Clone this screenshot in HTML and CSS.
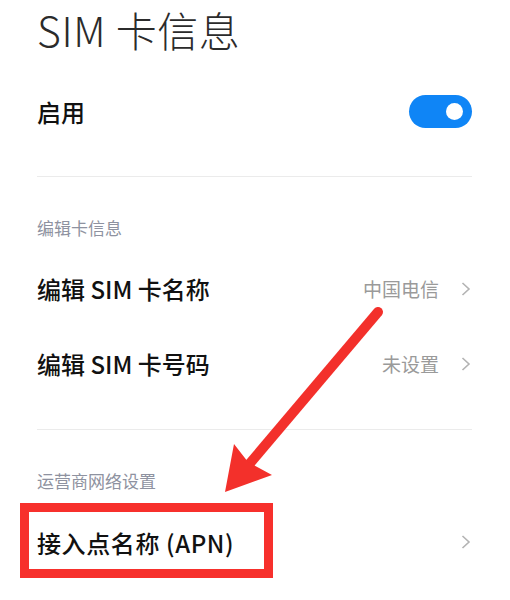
FILE: index.html
```html
<!DOCTYPE html>
<html lang="zh-CN">
<head>
<meta charset="utf-8">
<title>SIM 卡信息</title>
<link rel="stylesheet" href="styles.css">
</head>
<body>
<div class="page">
  <h1 class="title">SIM 卡信息</h1>
  <div class="row row-enable">
    <span class="label">启用</span>
    <span class="toggle"><span class="knob"></span></span>
  </div>
  <div class="divider"></div>
  <div class="section-header">编辑卡信息</div>
  <div class="row">
    <span class="label">编辑 SIM 卡名称</span>
    <span class="value">中国电信<svg class="chev" viewBox="0 0 10 14" width="10" height="14"><path d="M1.5 1 L8 7 L1.5 13" fill="none" stroke="#b3b3b3" stroke-width="1.6"/></svg></span>
  </div>
  <div class="row">
    <span class="label">编辑 SIM 卡号码</span>
    <span class="value">未设置<svg class="chev" viewBox="0 0 10 14" width="10" height="14"><path d="M1.5 1 L8 7 L1.5 13" fill="none" stroke="#b3b3b3" stroke-width="1.6"/></svg></span>
  </div>
  <div class="divider divider-2"></div>
  <div class="section-header">运营商网络设置</div>
  <div class="row row-apn">
    <span class="label">接入点名称 (APN)</span>
    <span class="value"><svg class="chev" viewBox="0 0 10 14" width="10" height="14"><path d="M1.5 1 L8 7 L1.5 13" fill="none" stroke="#b3b3b3" stroke-width="1.6"/></svg></span>
  </div>
</div>
<div class="highlight-box"></div>
<svg class="arrow" width="510" height="600" viewBox="0 0 510 600">
  <line x1="378" y1="312" x2="246" y2="468" stroke="#f3302b" stroke-width="10" stroke-linecap="round"/>
  <polygon points="225,492 234,444 248,462 272,475" fill="#f3302b"/>
</svg>
</body>
</html>
```
FILE: styles.css
```css
html, body {
  margin: 0;
  padding: 0;
  background: #ffffff;
}
body {
  width: 510px;
  height: 600px;
  overflow: hidden;
  position: relative;
  font-family: "Noto Sans CJK SC", "Noto Sans", sans-serif;
}
.page {
  padding: 0 38px 0 37px;
}
.title {
  margin: 0;
  height: 58px;
  line-height: 58px;
  font-size: 41px;
  font-weight: 300;
  color: #2b2b2b;
  letter-spacing: 0.6px;
}
.row {
  height: 75px;
  display: flex;
  align-items: center;
  justify-content: space-between;
}
.row-enable {
  margin-top: 16px;
  height: 74px;
}
.row-apn {
  height: 76px;
}
.label {
  font-size: 24px;
  font-weight: 500;
  color: #111111;
}
.row-apn .label {
  letter-spacing: 0.6px;
}
.value {
  display: flex;
  align-items: center;
  font-size: 19px;
  color: #9a9a9a;
}
.chev {
  margin-left: 22px;
  margin-right: 1px;
}
.toggle {
  width: 63px;
  height: 33px;
  border-radius: 17px;
  background: #0f85f6;
  display: flex;
  align-items: center;
  justify-content: flex-end;
  padding-right: 9px;
  box-sizing: border-box;
}
.knob {
  width: 17px;
  height: 17px;
  border-radius: 50%;
  background: #ffffff;
}
.divider {
  margin-top: 28px;
  height: 1px;
  background: #ebebeb;
}
.divider-2 {
  margin-top: 28px;
}
.section-header {
  padding-top: 28px;
  line-height: 46px;
  font-size: 17px;
  color: #8e92a0;
}
.highlight-box {
  position: absolute;
  left: 20px;
  top: 503px;
  width: 253px;
  height: 75px;
  box-sizing: border-box;
  border: 9px solid #f7302c;
}
.arrow {
  position: absolute;
  left: 0;
  top: 0;
}
```
